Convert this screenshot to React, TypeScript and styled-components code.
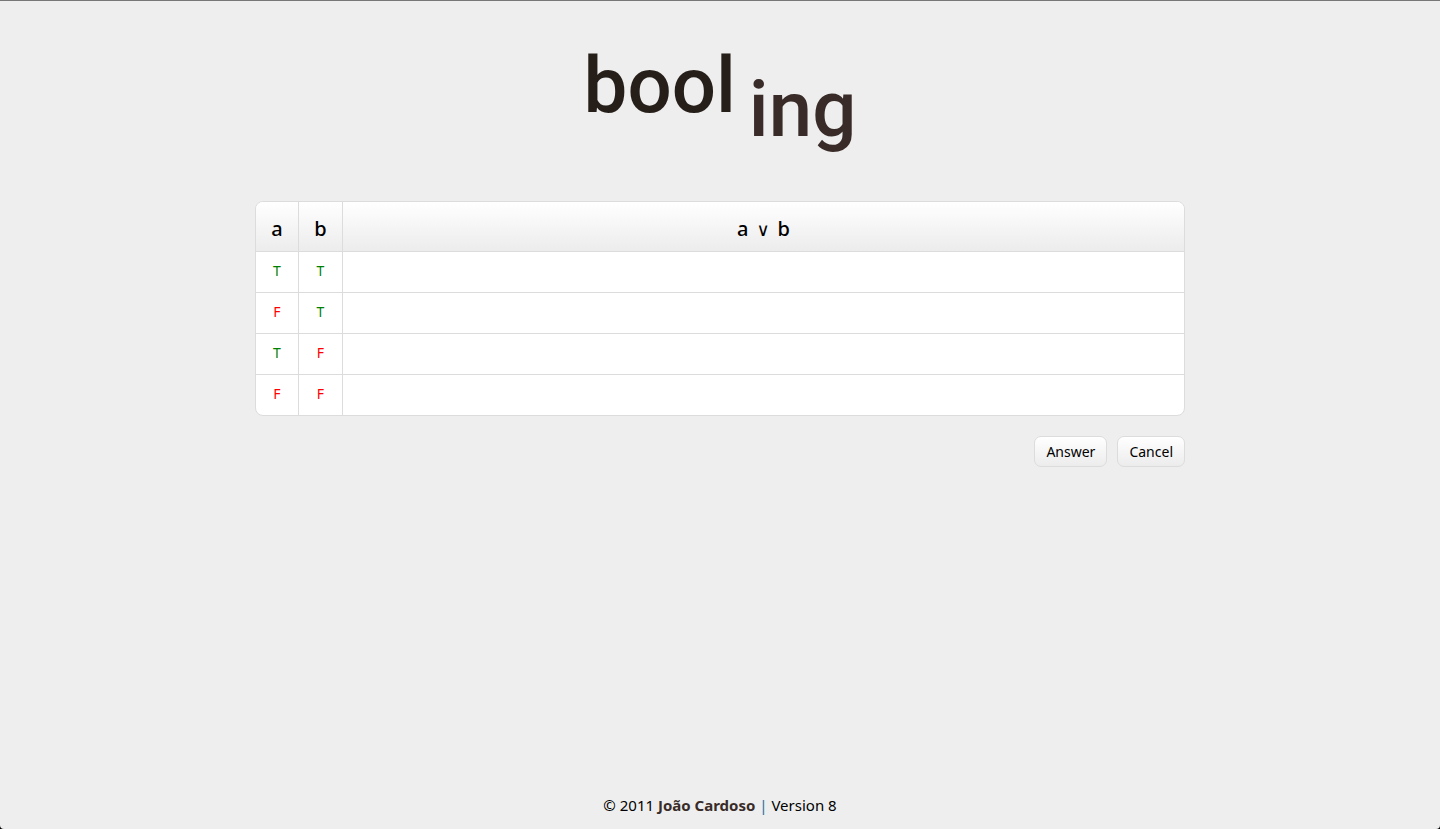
import React from "react";
import styled, { createGlobalStyle } from "styled-components";

const GlobalStyle = createGlobalStyle`
  *, *::before, *::after { box-sizing: border-box; }
  html { background: #000; }
  body {
    margin: 0;
    color: #000;
    font-family: "Noto Sans", "Open Sans", sans-serif;
    font-size: 14px;
    line-height: 20px;
  }
`;

const Page = styled.div`
  min-height: 100vh;
  display: flex;
  flex-direction: column;
  align-items: center;
  padding: 33px 24px 14px;
  background: #eee;
  border-top: 1px solid #777;
  border-radius: 0 0 4px 4px;
`;

const Logo = styled.h1`
  display: flex;
  gap: 13px;
  margin: 0;
  height: 167px;
  font-family: Roboto, sans-serif;
  font-size: 78px;
  font-weight: 500;
  line-height: 104px;
`;

const LogoPart = styled.span<{ $lowered?: boolean }>`
  color: ${(p) => (p.$lowered ? "#382b28" : "#261e19")};
  padding-top: ${(p) => (p.$lowered ? 24 : 0)}px;
`;

const Main = styled.main`
  width: 100%;
  max-width: 930px;
  flex: 1;
`;

const TruthTable = styled.table`
  width: 100%;
  table-layout: fixed;
  border: 1px solid #dcdcdc;
  border-radius: 8px;
  border-spacing: 0;
  overflow: hidden;
  background: #fff;
`;

const HeadCell = styled.th<{ $width?: number }>`
  width: ${(p) => (p.$width ? `${p.$width}px` : "auto")};
  height: 49px;
  padding: 4px 0 0;
  background: linear-gradient(#fff, #ececec);
  font-size: 20px;
  font-weight: 500;
  line-height: 28px;
  & + & { border-left: 1px solid #dcdcdc; }
`;

const Operator = styled.span`
  margin: 0 8px;
  font-family: "DejaVu Sans", sans-serif;
  font-size: 18px;
  font-weight: 400;
  line-height: 1;
`;

const Cell = styled.td<{ $value?: string }>`
  height: 41px;
  padding: 0 0 2px;
  border-top: 1px solid #dcdcdc;
  text-align: center;
  color: ${(p) => (p.$value === "T" ? "#008000" : "#f00")};
  & + & { border-left: 1px solid #dcdcdc; }
`;

const Actions = styled.div`
  display: flex;
  justify-content: flex-end;
  gap: 10px;
  margin-top: 20px;
`;

const Button = styled.button`
  height: 31px;
  padding: 0 11px;
  border: 1px solid #dcdcdc;
  border-radius: 7px;
  background: linear-gradient(#fff, #ececec);
  color: #000;
  font: inherit;
  cursor: pointer;
`;

const Footer = styled.footer`
  font-size: 15px;
  text-align: center;
`;

const Author = styled.a`
  color: #382b28;
  font-weight: 700;
  text-decoration: none;
`;

const Divider = styled.span`
  color: #2f6f9f;
`;

const rows = [
  ["T", "T"],
  ["F", "T"],
  ["T", "F"],
  ["F", "F"],
];

export default function App() {
  return (
    <>
      <GlobalStyle />
      <Page>
        <Logo>
          <LogoPart>bool</LogoPart>
          <LogoPart $lowered>ing</LogoPart>
        </Logo>
        <Main>
          <TruthTable>
            <thead>
              <tr>
                <HeadCell scope="col" $width={42}>a</HeadCell>
                <HeadCell scope="col" $width={44}>b</HeadCell>
                <HeadCell scope="col">a<Operator>∨</Operator>b</HeadCell>
              </tr>
            </thead>
            <tbody>
              {rows.map(([a, b]) => (
                <tr key={a + b}>
                  <Cell $value={a}>{a}</Cell>
                  <Cell $value={b}>{b}</Cell>
                  <Cell />
                </tr>
              ))}
            </tbody>
          </TruthTable>
          <Actions>
            <Button type="button">Answer</Button>
            <Button type="button">Cancel</Button>
          </Actions>
        </Main>
        <Footer>
          © 2011 <Author href="#">João Cardoso</Author> <Divider>|</Divider> Version 8
        </Footer>
      </Page>
    </>
  );
}
